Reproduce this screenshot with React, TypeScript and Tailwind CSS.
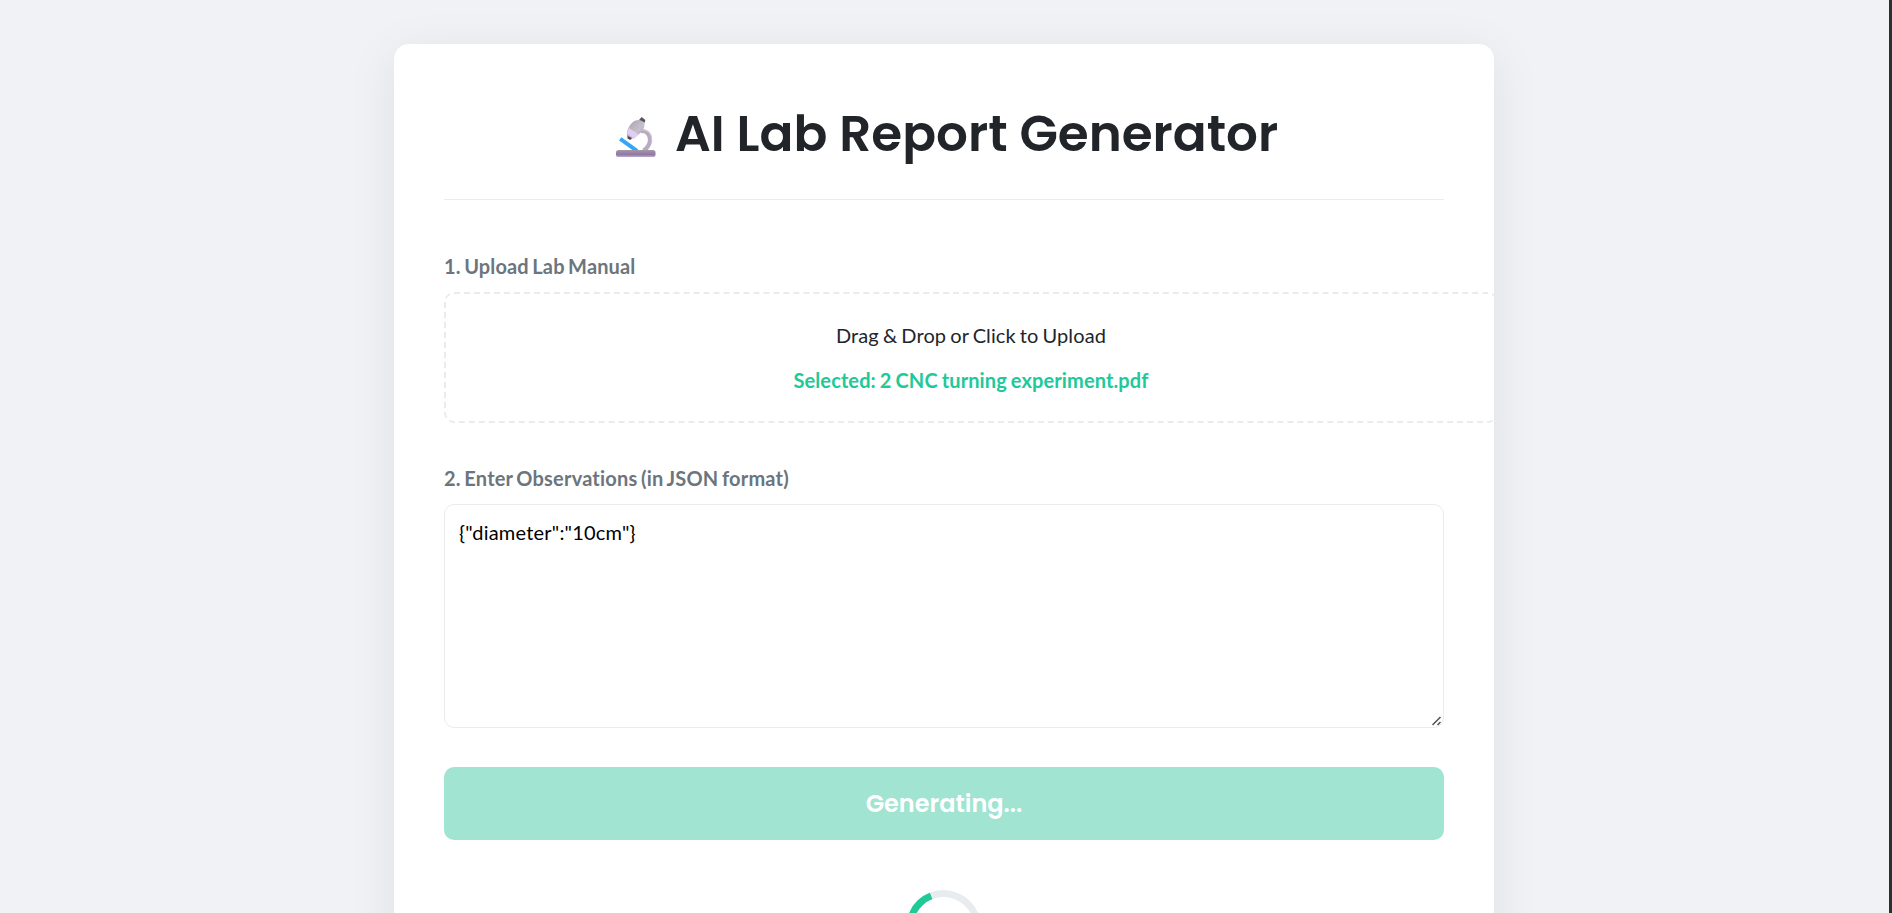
import React from "react";

function Microscope() {
  return (
    <svg viewBox="0 0 42 42" className="mt-[6px] h-[42px] w-[42px] shrink-0" aria-hidden="true">
      <defs>
        <linearGradient id="tube" x1="0" y1="0" x2="1" y2="1">
          <stop offset="0" stopColor="#a79fae" />
          <stop offset="0.6" stopColor="#c6c0cc" />
          <stop offset="1" stopColor="#9b92a4" />
        </linearGradient>
        <linearGradient id="base" x1="0" y1="0" x2="0" y2="1">
          <stop offset="0" stopColor="#a596ac" />
          <stop offset="0.65" stopColor="#8f7a9f" />
          <stop offset="1" stopColor="#c2a6d6" />
        </linearGradient>
      </defs>
      <path d="M24.5 15.2C30 14 34.6 18.5 34 24.5C33.5 29 31.5 32 27.5 34.8" fill="none" stroke="#b7acc1" strokeWidth="4.2" />
      <path d="M25 14C32 13 36.3 18.5 35.6 25" fill="none" stroke="#d6cedd" strokeWidth="1" />
      <path d="M4.2 22.8L21 34.8" stroke="#37a5f5" strokeWidth="4" />
      <path d="M23 4L25.6 1L29.4 4L28.4 7L25 7Z" fill="#59545f" />
      <path d="M11.3 18.5L17 21L14.4 24L11.6 22.8Z" fill="#54465f" />
      <path d="M16.4 6.6C19 3.2 25.2 3 28.2 6.6C29.2 10 27.5 14 24.6 16.8L17.4 22.8L11 19.4C10.6 15 12.8 10 16.4 6.6Z" fill="url(#tube)" />
      <path d="M13 12L22.4 18.4L18.4 22.4L11 17.6Z" fill="#e2cdf5" />
      <rect x="0" y="34" width="39.5" height="7" rx="2.6" fill="url(#base)" />
    </svg>
  );
}

export default function App() {
  return (
    <div className="flex h-[913px] overflow-hidden bg-[#f0f2f5] font-[Lato,sans-serif] text-[#212529]">
      <div className="flex min-w-0 flex-1 justify-center pt-[44px] pr-px">
        <main className="h-[1000px] w-[1100px] shrink-0 rounded-[15px] bg-white px-[50px] shadow-[0_10px_50px_rgba(0,0,0,0.08)]">
          <h1 className="flex h-[156px] items-center border-b border-[#e9ecef] pt-[25px] pl-[172px] font-[Poppins,Inter,sans-serif] text-[50px] leading-none font-semibold whitespace-nowrap">
            <Microscope />
            <span className="ml-[17px]">AI Lab Report Generator</span>
          </h1>
          <label className="mt-[50px] block h-[42px] text-[20px] leading-[32px] font-bold tracking-[0.14px] text-[#6c757d] [word-spacing:-1.5px]">
            1. Upload Lab Manual
          </label>
          <div className="flex h-[131px] w-[1054px] flex-col items-center rounded-[10px] border-2 border-dashed border-[#e9ecef] pt-[25px] text-[20px] leading-[32px]">
            <p className="tracking-[0.11px] [word-spacing:-1.2px]">Drag &amp; Drop or Click to Upload</p>
            <p className="mt-[13px] font-bold tracking-[0.11px] text-[#20c997] [word-spacing:-1px]">
              Selected: 2 CNC turning experiment.pdf
            </p>
          </div>
          <label className="mt-[39px] block h-[42px] text-[20px] leading-[32px] font-bold tracking-[0.2px] text-[#6c757d] [word-spacing:-1.5px]">
            2. Enter Observations (in JSON format)
          </label>
          <div className="relative">
            <textarea
              className="block h-[224px] w-full resize-none rounded-[10px] border border-[#e9ecef] bg-white px-[14px] py-[14px] text-[20px] leading-[26px] tracking-[0.2px] text-black outline-none"
              defaultValue={'{"diameter":"10cm"}'}
            />
            <svg viewBox="0 0 10 10" className="absolute right-[2px] bottom-[2px] h-[10px] w-[10px]" aria-hidden="true">
              <path d="M0.5 9L8.5 1M5.5 9L8.5 6" stroke="#4f4f4f" strokeWidth="1.5" />
            </svg>
          </div>
          <button className="mt-[39px] block h-[73px] w-full rounded-[10px] bg-[#a1e4d1] font-[Poppins,Inter,sans-serif] text-[24px] font-semibold text-white">
            Generating...
          </button>
          <div className="mt-[50px] ml-[462px] h-[75px] w-[75px] rotate-[-66deg] rounded-full border-[7px] border-[#e9ecef] border-t-[#20c997]" />
        </main>
      </div>
      <div className="w-[3px] shrink-0 bg-[#2a2e2e]" />
    </div>
  );
}
